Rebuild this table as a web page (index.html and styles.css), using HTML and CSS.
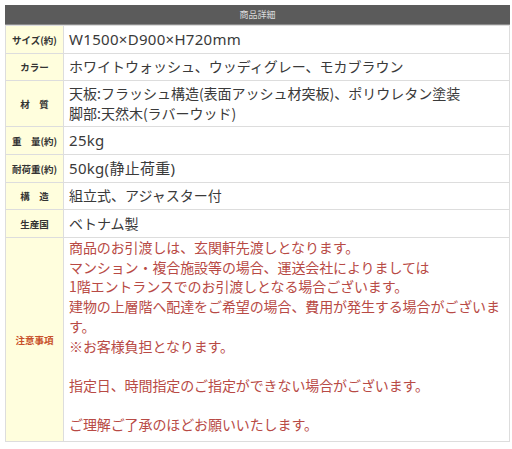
FILE: index.html
```html
<!DOCTYPE html>
<html lang="ja">
<head>
<meta charset="utf-8">
<link rel="stylesheet" href="styles.css">
</head>
<body>
<div class="page">
  <div class="spec">
    <div class="spec-head">商品詳細</div>
    <table class="spec-table">
      <tr class="r1"><th>サイズ(約)</th><td class="latin">W1500×D900×H720mm</td></tr>
      <tr class="r2"><th>カラー</th><td>ホワイトウォッシュ、ウッディグレー、モカブラウン</td></tr>
      <tr class="r3"><th>材　質</th><td>天板:フラッシュ構造(表面アッシュ材突板)、ポリウレタン塗装<br>脚部:天然木(ラバーウッド)</td></tr>
      <tr class="r4"><th>重　量(約)</th><td class="latin">25kg</td></tr>
      <tr class="r5"><th>耐荷重(約)</th><td class="latin">50kg(静止荷重)</td></tr>
      <tr class="r6"><th>構　造</th><td>組立式、アジャスター付</td></tr>
      <tr class="r7"><th>生産国</th><td>ベトナム製</td></tr>
      <tr class="note"><th class="note-label">注意事項</th><td class="note-text">商品のお引渡しは、玄関軒先渡しとなります。<br>マンション・複合施設等の場合、運送会社によりましては<br>1階エントランスでのお引渡しとなる場合ございます。<br>建物の上層階へ配達をご希望の場合、費用が発生する場合がございます。<br>※お客様負担となります。<br><br>指定日、時間指定のご指定ができない場合がございます。<br><br>ご理解ご了承のほどお願いいたします。</td></tr>
    </table>
  </div>
  <div class="next-head"></div>
</div>
</body>
</html>
```

FILE: styles.css
```css
html, body {
  margin: 0;
  padding: 0;
  background: #ffffff;
}
body {
  font-family: "Noto Sans CJK JP", "Noto Sans", sans-serif;
  color: #3a3a3a;
}
.page {
  padding: 5px 2px 0 5px;
  width: 505px;
}
.spec-head {
  height: 19px;
  background: #5b5b5b;
  border-bottom: 1px solid #8a8a8a;
  color: #dcdcdc;
  font-size: 9px;
  line-height: 19px;
  text-align: center;
}
.spec-table {
  width: 505px;
  border-collapse: collapse;
  table-layout: fixed;
}
.spec-table th,
.spec-table td {
  border: 1px solid #dddddd;
  padding: 0;
  overflow: hidden;
}
.spec-table th {
  width: 57px;
  background: #fffedd;
  font-size: 9.5px;
  line-height: 12px;
  font-weight: bold;
  color: #333333;
  text-align: center;
  white-space: nowrap;
}
.spec-table td {
  font-size: 14px;
  line-height: 19.5px;
  padding: 0 5px;
  color: #3a3a3a;
  vertical-align: middle;
}
.spec-table td.latin {
  font-family: "Noto Sans", "Noto Sans CJK JP", sans-serif;
  font-size: 15px;
  letter-spacing: 0.3px;
}
.r1 { height: 28px; }
.r2 { height: 27px; }
.r3 { height: 46px; }
.r4, .r5, .r7 { height: 28px; }
.r6 { height: 27px; }
.spec-table th.note-label {
  color: #c8502a;
}
.spec-table td.note-text {
  color: #b84a45;
  line-height: 19.7px;
  letter-spacing: -0.1px;
  padding-top: 0;
  padding-bottom: 6px;
}
.next-head {
  margin-top: 7px;
  height: 4px;
  background: #5b5b5b;
}
```
